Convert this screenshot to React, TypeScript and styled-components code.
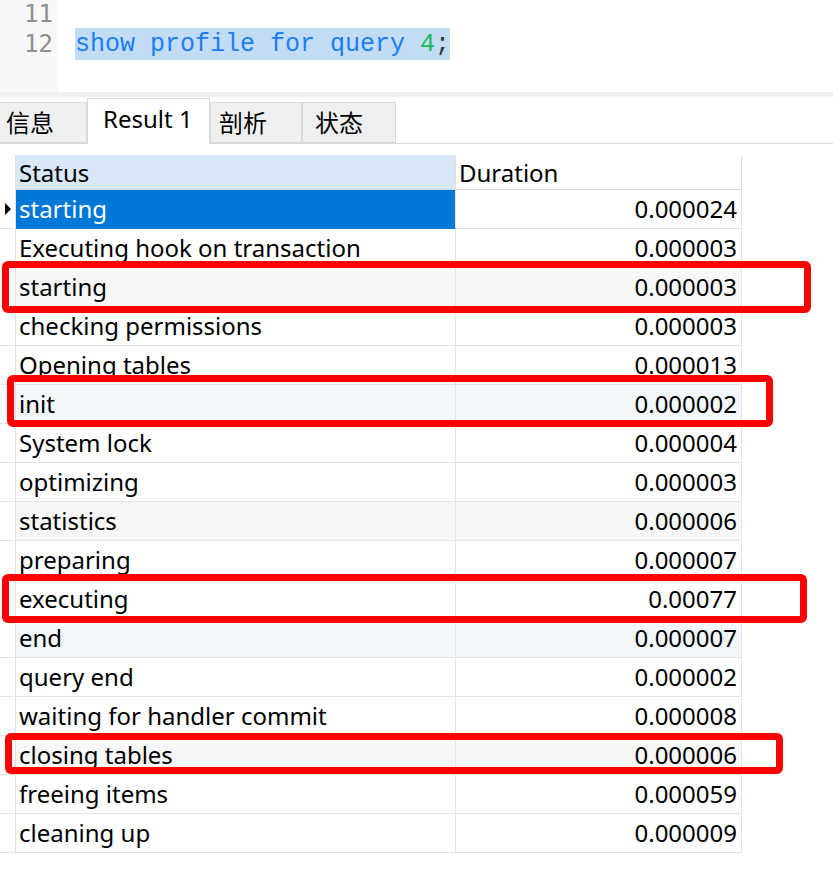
import React from "react";
import styled, { createGlobalStyle } from "styled-components";

const Global = createGlobalStyle`
  html, body { margin: 0; padding: 0; background: #ffffff; overflow: hidden; }
  * { box-sizing: border-box; }
`;

const Page = styled.div`
  position: relative;
  width: 833px;
  height: 886px;
  background: #fff;
  font-family: "Noto Sans", "Noto Sans CJK SC", sans-serif;
  color: #000;
`;

const Editor = styled.div`
  display: flex;
  height: 92px;
  overflow: hidden;
`;

const Gutter = styled.div`
  width: 58px;
  background: #f7f7f7;
  padding-right: 5px;
  text-align: right;
  font-family: "DejaVu Sans Mono", "Liberation Mono", monospace;
  font-size: 24px;
  color: #8f8f8f;
`;

const CodeArea = styled.div`
  flex: 1;
  padding-left: 17px;
  font-family: "Liberation Mono", monospace;
  font-size: 25px;
`;

const Line = styled.div<{ $h: number }>`
  height: ${(p) => p.$h}px;
  line-height: ${(p) => p.$h}px;
  white-space: pre;
`;

const Selected = styled.span`
  background: #c2dcf6;
  display: inline-block;
  height: 32px;
  line-height: 34px;
`;

const Tok = styled.span<{ $c: string }>`
  color: ${(p) => p.$c};
`;

const Separator = styled.div`
  height: 5px;
  background: #f0f0f0;
`;

const TabBar = styled.div`
  display: flex;
  align-items: flex-end;
  height: 47px;
  border-bottom: 1px solid #d9d9d9;
`;

const Tab = styled.div<{ $w: number; $pad: number; $active?: boolean; $first?: boolean }>`
  width: ${(p) => p.$w}px;
  height: ${(p) => (p.$active ? 46 : 41)}px;
  margin-bottom: ${(p) => (p.$active ? -1 : 0)}px;
  background: ${(p) => (p.$active ? "#ffffff" : "#f0f0f0")};
  border: 1px solid #d9d9d9;
  border-bottom: ${(p) => (p.$active ? "none" : "1px solid #d9d9d9")};
  border-left: ${(p) => (p.$first ? "none" : "1px solid #d9d9d9")};
  padding-left: ${(p) => p.$pad}px;
  padding-top: 4px;
  font-size: 24px;
  line-height: 32px;
  white-space: nowrap;
`;

const Grid = styled.div`
  margin-top: 11px;
  display: grid;
  grid-template-columns: 16px 440px 286px;
  width: 742px;
`;

const HeadGutter = styled.div`
  height: 35px;
  border-right: 1px solid #e0e0e0;
`;

const HeadCell = styled.div<{ $blue?: boolean }>`
  height: 35px;
  background: ${(p) => (p.$blue ? "#d9e8f6" : "#ffffff")};
  border-bottom: 1px solid #d8d8d8;
  border-right: 1px solid #e0e0e0;
  padding-left: 3px;
  font-size: 24px;
  line-height: 35px;
  white-space: nowrap;
`;

const RowGutter = styled.div`
  height: 39px;
  border-bottom: 1px solid #e4e4e4;
  border-right: 1px solid #e0e0e0;
  display: flex;
  align-items: center;
  padding-left: 5px;
`;

const Arrow = styled.div`
  width: 0;
  height: 0;
  border-top: 6px solid transparent;
  border-bottom: 6px solid transparent;
  border-left: 6px solid #000;
`;

const Cell = styled.div<{ $bg: string; $sel?: boolean; $right?: boolean }>`
  height: 39px;
  background: ${(p) => (p.$sel ? "#0078d7" : p.$bg)};
  color: ${(p) => (p.$sel ? "#ffffff" : "#000000")};
  border-bottom: 1px solid ${(p) => (p.$sel ? "#0078d7" : "#e4e4e4")};
  border-right: 1px solid #e4e4e4;
  padding: 0 4px 0 3px;
  text-align: ${(p) => (p.$right ? "right" : "left")};
  font-size: 24px;
  line-height: 38px;
  white-space: nowrap;
`;

const RedBox = styled.div`
  position: absolute;
  border: 7px solid #ff0000;
  border-radius: 6px;
  pointer-events: none;
`;

const rows: [string, string][] = [
  ["starting", "0.000024"],
  ["Executing hook on transaction", "0.000003"],
  ["starting", "0.000003"],
  ["checking permissions", "0.000003"],
  ["Opening tables", "0.000013"],
  ["init", "0.000002"],
  ["System lock", "0.000004"],
  ["optimizing", "0.000003"],
  ["statistics", "0.000006"],
  ["preparing", "0.000007"],
  ["executing", "0.00077"],
  ["end", "0.000007"],
  ["query end", "0.000002"],
  ["waiting for handler commit", "0.000008"],
  ["closing tables", "0.000006"],
  ["freeing items", "0.000059"],
  ["cleaning up", "0.000009"],
];

const rowBg = (i: number) => {
  const n = i + 1;
  if (n % 3 !== 0) return "#ffffff";
  return (n / 3) % 2 === 1 ? "#f7f7f7" : "#f3f8fd";
};

const boxes = [
  { left: 2, top: 261, width: 809, height: 52 },
  { left: 7, top: 375, width: 766, height: 52 },
  { left: 2, top: 574, width: 805, height: 49 },
  { left: 5, top: 733, width: 778, height: 41 },
];

export default function App() {
  return (
    <Page>
      <Global />
      <Editor>
        <Gutter>
          <Line $h={28}>11</Line>
          <Line $h={32}>12</Line>
        </Gutter>
        <CodeArea>
          <Line $h={28}> </Line>
          <Line $h={32}>
            <Selected>
              <Tok $c="#1a7ef2">show profile for query </Tok>
              <Tok $c="#1bb853">4</Tok>
              <Tok $c="#333333">;</Tok>
            </Selected>
          </Line>
        </CodeArea>
      </Editor>
      <Separator />
      <TabBar>
        <Tab $w={87} $pad={6} $first>信息</Tab>
        <Tab $w={123} $pad={15} $active>Result 1</Tab>
        <Tab $w={92} $pad={8}>剖析</Tab>
        <Tab $w={94} $pad={12}>状态</Tab>
      </TabBar>
      <Grid>
        <HeadGutter />
        <HeadCell $blue>Status</HeadCell>
        <HeadCell>Duration</HeadCell>
        {rows.map(([s, d], i) => (
          <React.Fragment key={i}>
            <RowGutter>{i === 0 && <Arrow />}</RowGutter>
            <Cell $bg={rowBg(i)} $sel={i === 0}>{s}</Cell>
            <Cell $bg={i === 0 ? "#ffffff" : rowBg(i)} $right>{d}</Cell>
          </React.Fragment>
        ))}
      </Grid>
      {boxes.map((b, i) => (
        <RedBox key={i} style={{ left: b.left, top: b.top, width: b.width, height: b.height }} />
      ))}
    </Page>
  );
}
